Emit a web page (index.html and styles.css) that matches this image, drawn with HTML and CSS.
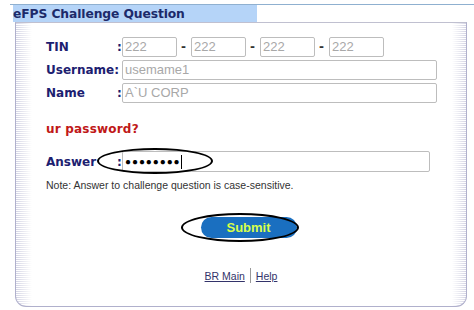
FILE: index.html
```html
<!DOCTYPE html>
<html>
<head>
<meta charset="utf-8">
<link rel="stylesheet" href="styles.css">
</head>
<body>
<div class="page">
  <div class="topline"></div>
  <div class="titlebar"><span class="title">eFPS Challenge Question</span></div>
  <div class="panel">
    <div class="content">
      <div class="fields">
        <div class="label">TIN</div><div class="colon">:</div>
        <div class="tin">
          <div class="input small">222</div><span class="dash">-</span>
          <div class="input small">222</div><span class="dash">-</span>
          <div class="input small">222</div><span class="dash">-</span>
          <div class="input small">222</div>
        </div>
        <div class="label">Username:</div><div class="colon"></div>
        <div class="input wide">usemame1</div>
        <div class="label">Name</div><div class="colon">:</div>
        <div class="input wide">A`U CORP</div>
      </div>
      <div class="question">ur password?</div>
      <div class="answer-row">
        <div class="label">Answer</div><div class="colon">:</div>
        <div class="input answer"><span class="dots">●●●●●●●●</span><span class="caret"></span></div>
        <div class="ring ring-answer"></div>
      </div>
      <div class="note">Note: Answer to challenge question is case-sensitive.</div>
      <div class="submit-row">
        <div class="submit-wrap">
          <button class="submit">Submit</button>
          <div class="ring ring-submit"></div>
        </div>
      </div>
      <div class="links"><a href="#">BR Main</a><span class="sep"></span><a href="#">Help</a></div>
    </div>
  </div>
</div>
</body>
</html>
```

FILE: styles.css
```css
html, body { margin: 0; padding: 0; background: #fff; }
body { width: 474px; height: 310px; overflow: hidden; font-family: "DejaVu Sans", Verdana, sans-serif; }
.page { position: relative; padding-top: 4px; }
.topline { height: 1px; background: #8fb0d0; margin-left: 10px; }
.titlebar { margin-left: 13px; width: 244px; height: 17px; background: #b5d4f8; display: flex; align-items: center; }
.title { font-weight: bold; font-size: 12.3px; color: #1c2a6a; letter-spacing: -0.1px; }
.panel {
  margin-left: 15px; width: 450px; height: 283px;
  border: 1px solid #b0b0cc; border-top-color: #c0c0d0;
  border-radius: 0 0 11px 11px;
  background:
    linear-gradient(to right, rgba(255,255,255,0) 0, #fff 16px) left top / 20px 100% no-repeat,
    linear-gradient(to left, rgba(255,255,255,0) 0, #fff 14px) right top / 18px 100% no-repeat,
    repeating-linear-gradient(to bottom, #d4d4e4 0, #d4d4e4 1px, #fff 1px, #fff 2px);
  position: relative;
}
.content { position: absolute; left: 16px; right: 14px; top: 0; bottom: 0; background: #fff; padding: 14px 0 0 14px; }
.fields { display: grid; grid-template-columns: 71px 5px auto; row-gap: 3px; align-items: center; }
.label { font-weight: bold; font-size: 12px; color: #1c2070; }
.colon { font-weight: bold; font-size: 12px; color: #1c2070; }
.tin { display: flex; align-items: center; }
.input {
  box-sizing: border-box; height: 20px; border: 1px solid #bdbdbd; border-radius: 2px;
  font-family: "Liberation Sans", Arial, sans-serif; font-size: 13px; color: #a8a8a8;
  padding: 0 2px; line-height: 18px; background: #fff;
}
.small { width: 55px; }
.dash { width: 13px; text-align: center; font-weight: bold; font-size: 12px; color: #333; padding-right: 1px; }
.wide { width: 315px; }
.question { margin-top: 19px; font-weight: bold; font-size: 12px; color: #c01818; letter-spacing: 0.2px; }
.answer-row { position: relative; display: grid; grid-template-columns: 71px 5px auto; align-items: center; margin-top: 15px; }
.answer { width: 308px; height: 21px; display: flex; align-items: center; color: #000; }
.dots { font-size: 10px; letter-spacing: 0.9px; color: #000; }
.caret { width: 1px; height: 14px; background: #000; margin-left: 0; }
.ring { position: absolute; border: 2.5px solid #000; border-radius: 50%; box-sizing: border-box; }
.ring-answer { left: 51px; top: -3px; width: 116px; height: 26px; }
.note { margin-top: 7px; font-family: "Liberation Sans", Arial, sans-serif; font-size: 10.5px; color: #333; }
.submit-row { display: flex; justify-content: center; margin-top: 22px; padding-right: 17px; }
.submit-wrap { position: relative; padding: 4px 4px 4px 20px; }
.submit {
  width: 96px; height: 21px; border: none; border-radius: 11px;
  background: #1a6fc0; color: #d8ff48; font-family: "Liberation Sans", Arial, sans-serif;
  font-weight: bold; font-size: 13px; padding: 0; display: block;
}
.ring-submit { left: 0; top: 0; width: 118px; height: 29px; }
.links { display: flex; justify-content: center; align-items: center; margin-top: 26px; padding-right: 16px; font-family: "Liberation Sans", Arial, sans-serif; font-size: 10.5px; }
.links a { color: #33336a; text-decoration: underline; }
.sep { width: 1px; height: 15px; background: #999; margin: 0 5px; }
```
